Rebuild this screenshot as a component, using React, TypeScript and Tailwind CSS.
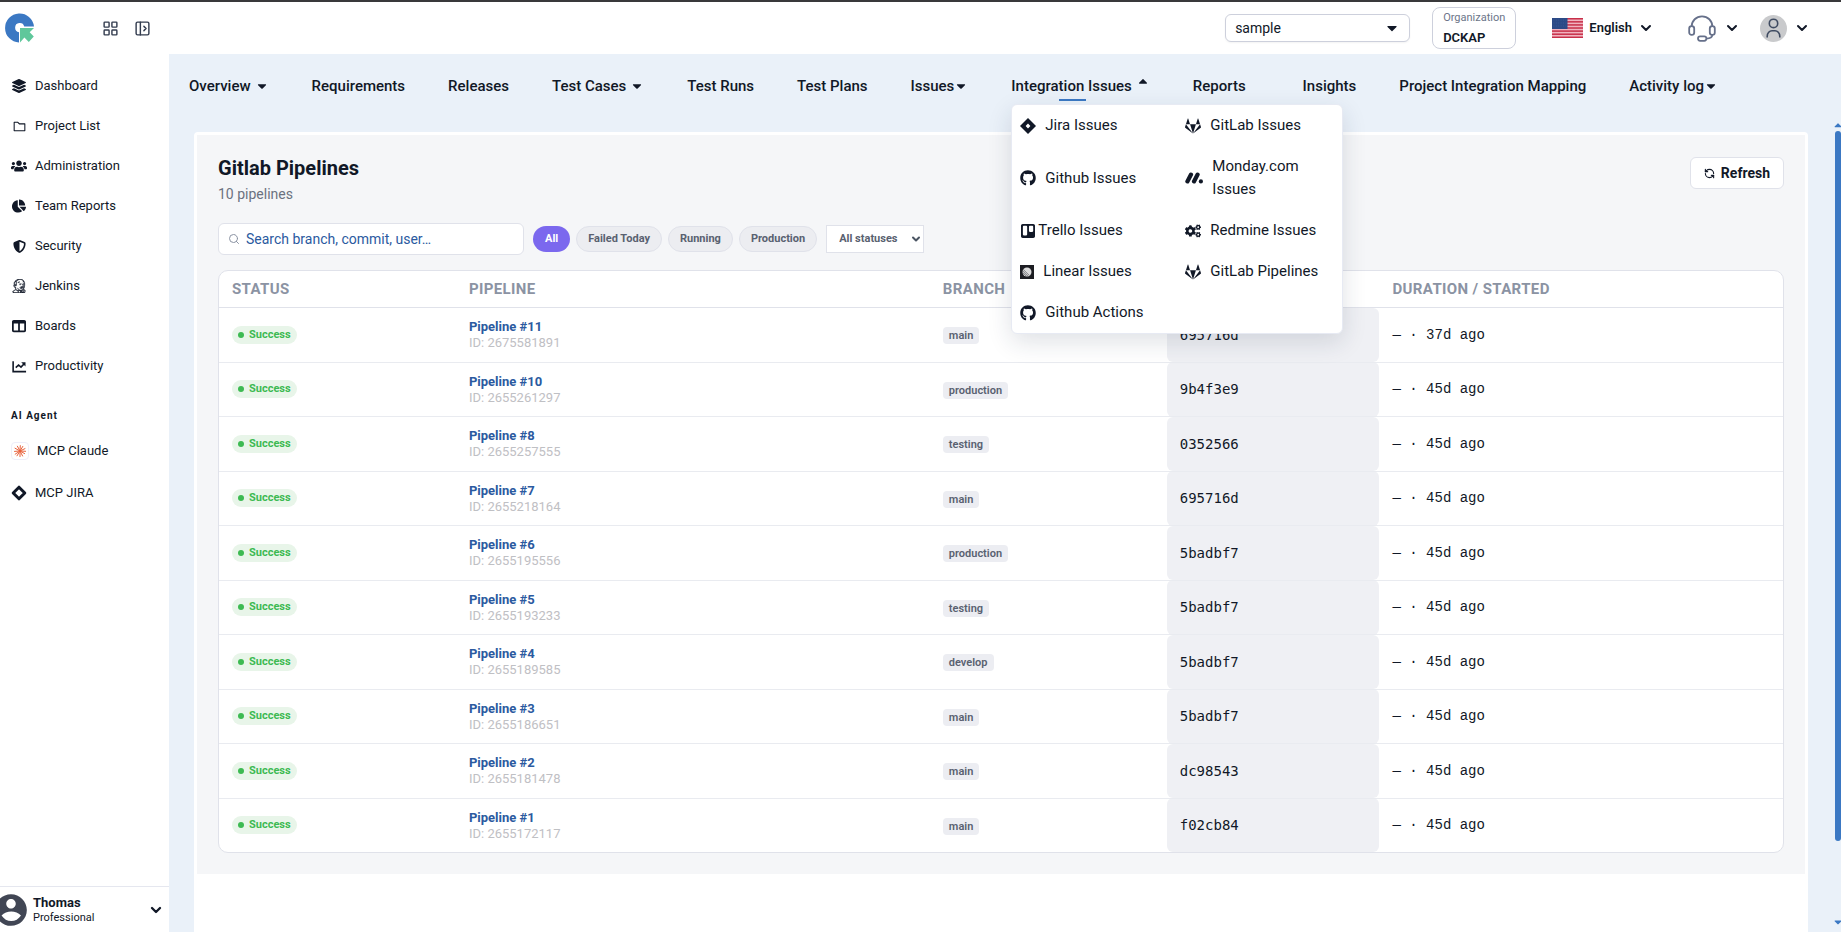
import type { ReactNode } from 'react'
import { LayoutGrid, PanelLeftOpen, Search, RefreshCcw, ChevronDown } from 'lucide-react'
import { FaUsers, FaChartPie, FaJenkins, FaTrello, FaGitlab, FaCaretDown, FaCaretUp, FaCogs, FaGithub, FaLayerGroup } from 'react-icons/fa'
import { FaShieldHalved, FaTableColumns } from 'react-icons/fa6'
import { AiOutlineFolder } from 'react-icons/ai'
import { RiAccountCircleFill } from 'react-icons/ri'

interface Pipeline {
  number: number
  id: string
  branch: string
  commit: string
  age: string
}

interface NavItem {
  label: string
  caret?: 'down' | 'up'
  tight?: boolean
  spaced?: boolean
}

interface MenuItem {
  label: string
  icon: ReactNode
  tight?: boolean
}

const pipelines: Pipeline[] = [
  { number: 11, id: '2675581891', branch: 'main', commit: '695716d', age: '37d ago' },
  { number: 10, id: '2655261297', branch: 'production', commit: '9b4f3e9', age: '45d ago' },
  { number: 8, id: '2655257555', branch: 'testing', commit: '0352566', age: '45d ago' },
  { number: 7, id: '2655218164', branch: 'main', commit: '695716d', age: '45d ago' },
  { number: 6, id: '2655195556', branch: 'production', commit: '5badbf7', age: '45d ago' },
  { number: 5, id: '2655193233', branch: 'testing', commit: '5badbf7', age: '45d ago' },
  { number: 4, id: '2655189585', branch: 'develop', commit: '5badbf7', age: '45d ago' },
  { number: 3, id: '2655186651', branch: 'main', commit: '5badbf7', age: '45d ago' },
  { number: 2, id: '2655181478', branch: 'main', commit: 'dc98543', age: '45d ago' },
  { number: 1, id: '2655172117', branch: 'main', commit: 'f02cb84', age: '45d ago' },
]

const navItems: NavItem[] = [
  { label: 'Overview', caret: 'down' },
  { label: 'Requirements' },
  { label: 'Releases' },
  { label: 'Test Cases', caret: 'down' },
  { label: 'Test Runs' },
  { label: 'Test Plans' },
  { label: 'Issues', caret: 'down', tight: true },
  { label: 'Integration Issues', caret: 'up' },
  { label: 'Reports', spaced: true },
  { label: 'Insights' },
  { label: 'Project Integration Mapping' },
  { label: 'Activity log', caret: 'down', tight: true },
]

const filters = ['All', 'Failed Today', 'Running', 'Production']

function Logo() {
  return (
    <svg viewBox="0 0 30 30" className="size-[30px]" aria-hidden="true">
      <path d="M14 29.5A14.5 14.5 0 1 1 29 13.5H19.2A4.6 4.6 0 1 0 14 19.2Z" fill="#3b78c3" />
      <path d="M15 15H29L24.7 19.2 28.8 23.6 23.8 28.9 19.4 24.6 15 29.4Z" fill="#5fc79b" />
    </svg>
  )
}

function FlagIcon() {
  return (
    <svg viewBox="0 0 31 20" className="h-5 w-[31px]" aria-hidden="true">
      <rect width="31" height="20" fill="#f0b3bf" />
      {[0, 3, 6, 9, 12, 15, 18].map((y) => (
        <rect key={y} y={y * 1.03} width="31" height="1.5" fill="#c8304a" />
      ))}
      <rect width="15.5" height="11" fill="#2b4a86" />
      {[2, 5, 8].map((y) => (
        <path key={y} d={`M1.5 ${y}H14.5`} stroke="#4563a0" strokeWidth="0.7" strokeDasharray="0.8 1.6" />
      ))}
    </svg>
  )
}

function HeadsetIcon() {
  return (
    <svg viewBox="0 0 28 27" className="h-[27px] w-7" fill="none" stroke="#66708a" strokeWidth="1.8" aria-hidden="true">
      <path d="M3.6 11.5C3.8 5.6 8.2 1.4 14 1.4S24.2 5.6 24.4 11.5" />
      <rect x="1.2" y="11.2" width="5" height="8.6" rx="2.4" />
      <rect x="21.8" y="11.2" width="5" height="8.6" rx="2.4" />
      <path d="M24.4 19.8C24.2 22.4 21.8 23.6 18.4 23.6" />
      <rect x="10" y="21.4" width="8.4" height="4.4" rx="2.2" />
    </svg>
  )
}

function UserIcon() {
  return (
    <svg viewBox="0 0 27 27" className="size-[27px]" fill="none" stroke="#3f4b61" strokeWidth="1.6" aria-hidden="true">
      <circle cx="13.5" cy="13.5" r="13.5" fill="#c9cacc" stroke="none" />
      <circle cx="13.5" cy="8.4" r="4.2" />
      <path d="M7.2 22.4V21.4C7.2 18 9.6 15.8 12 15.8H15C17.4 15.8 19.8 18 19.8 21.4V22.4" />
    </svg>
  )
}

function ChartIcon() {
  return (
    <svg viewBox="0 0 16 16" className="size-[15px]" fill="none" stroke="currentColor" strokeWidth="1.7" aria-hidden="true">
      <path d="M1.2 2.5V13.5H15" />
      <path d="M4 9.2L7 6.4L9.6 8.6L13 5" />
      <path d="M9.8 3.4H14.4V8Z" fill="currentColor" stroke="none" />
    </svg>
  )
}

function BurstIcon() {
  return (
    <svg viewBox="0 0 12 12" className="size-3" stroke="#e8623d" strokeWidth="1" strokeLinecap="round" aria-hidden="true">
      <path d="M6 6L6.3 .6M6 6L8.8 1.4M6 6L11 3.6M6 6L11.6 6.3M6 6L10.6 8.6M6 6L8.6 11M6 6L6 11.6M6 6L3 10.8M6 6L1.2 9.2M6 6L.5 6.4M6 6L1 3.2M6 6L3.4 1.2" />
    </svg>
  )
}

function DiamondIcon() {
  return (
    <svg viewBox="0 0 16 16" className="size-4" aria-hidden="true">
      <path d="M8 2.2L13.8 8L8 13.8L2.2 8Z" fill="none" stroke="currentColor" strokeWidth="3" strokeLinejoin="round" />
    </svg>
  )
}

function JiraIcon() {
  return (
    <svg viewBox="0 0 16 16" className="size-4" aria-hidden="true">
      <path d="M8 0L16 8L8 16L0 8Z M8 5.6L5.6 8L8 10.4L10.4 8Z" fill="currentColor" fillRule="evenodd" />
    </svg>
  )
}

function MondayIcon() {
  return (
    <svg viewBox="0 0 18 12" className="h-3 w-[18px]" aria-hidden="true">
      <path d="M2.4 9.4L6 2.6M9 9.4L12.6 2.6" stroke="currentColor" strokeWidth="4.2" strokeLinecap="round" />
      <circle cx="15.9" cy="9.4" r="2.1" fill="currentColor" />
    </svg>
  )
}

function LinearIcon() {
  return (
    <svg viewBox="0 0 14 14" className="size-3.5" aria-hidden="true">
      <rect width="14" height="14" fill="#1c1d22" />
      <circle cx="7" cy="7" r="4.5" fill="#dcdcdc" />
      <path d="M2.6 5.8L8.2 11.4M2.5 7.4L6.6 11.5M3.2 4.4L9.6 10.8" stroke="#55565b" strokeWidth="0.7" />
    </svg>
  )
}

const sidebarItems: MenuItem[] = [
  { label: 'Dashboard', icon: <FaLayerGroup className="size-3.5" /> },
  { label: 'Project List', icon: <AiOutlineFolder className="size-[15px]" /> },
  { label: 'Administration', icon: <FaUsers className="size-4" /> },
  { label: 'Team Reports', icon: <FaChartPie className="size-3.5" /> },
  { label: 'Security', icon: <FaShieldHalved className="size-[13px]" /> },
  { label: 'Jenkins', icon: <FaJenkins className="size-3.5" stroke="currentColor" strokeWidth={14} /> },
  { label: 'Boards', icon: <FaTableColumns className="size-3.5" /> },
  { label: 'Productivity', icon: <ChartIcon /> },
]

const integrations: MenuItem[] = [
  { label: 'Jira Issues', icon: <JiraIcon /> },
  { label: 'GitLab Issues', icon: <FaGitlab className="size-4" /> },
  { label: 'Github Issues', icon: <FaGithub className="size-4" /> },
  { label: 'Monday.com Issues', icon: <MondayIcon /> },
  { label: 'Trello Issues', icon: <FaTrello className="size-4" />, tight: true },
  { label: 'Redmine Issues', icon: <FaCogs className="size-4" /> },
  { label: 'Linear Issues', icon: <LinearIcon /> },
  { label: 'GitLab Pipelines', icon: <FaGitlab className="size-4" /> },
  { label: 'Github Actions', icon: <FaGithub className="size-4" /> },
]

function Sidebar() {
  return (
    <aside className="flex w-[169px] shrink-0 flex-col bg-white">
      <nav className="flex-1 pt-3">
        {sidebarItems.map((item) => (
          <a key={item.label} href="#" className="flex h-10 items-center gap-2 pl-[11px] text-[13px]">
            <span className="flex w-4 justify-center">{item.icon}</span>
            {item.label}
          </a>
        ))}
        <h2 className="mt-5 px-[11px] text-[10px] leading-5 font-bold tracking-widest">AI Agent</h2>
        <a href="#" className="mt-1 flex h-[42px] items-center gap-2 pl-[11px] text-[13px]">
          <span className="flex size-[18px] items-center justify-center rounded-sm border border-[#eeeefa]">
            <BurstIcon />
          </span>
          MCP Claude
        </a>
        <a href="#" className="flex h-[42px] items-center gap-2 pl-[11px] text-[13px]">
          <DiamondIcon />
          MCP JIRA
        </a>
      </nav>
      <button type="button" className="flex h-[46px] items-center border-t border-[#e5e7ef] pr-[5px] text-left">
        <RiAccountCircleFill className="-ml-2 size-[38px] text-[#414654]" />
        <span className="ml-[3px] flex-1">
          <span className="block text-[13px] leading-4 font-bold">Thomas</span>
          <span className="block text-[11px] leading-[14px]">Professional</span>
        </span>
        <ChevronDown className="size-4" strokeWidth={3.5} />
      </button>
    </aside>
  )
}

function Header() {
  return (
    <header className="flex h-[54px] shrink-0 items-center border-t-2 border-[#39393b] bg-white pr-[31px] pl-[5px]">
      <Logo />
      <button type="button" aria-label="Apps" className="ml-[67px]">
        <LayoutGrid className="size-[17px] text-[#333c4f]" />
      </button>
      <button type="button" aria-label="Expand sidebar" className="ml-[15px]">
        <PanelLeftOpen className="size-[17px] text-[#333c4f]" />
      </button>
      <div className="ml-auto flex items-center">
        <div className="relative">
          <select
            aria-label="Project"
            className="h-7 w-[185px] appearance-none rounded-md border border-[#cdd0dc] bg-white px-[9px] text-sm shadow-xs"
          >
            <option>sample</option>
          </select>
          <FaCaretDown className="pointer-events-none absolute top-1.5 right-2.5 size-4" />
        </div>
        <div className="ml-[22px] flex h-[42px] flex-col justify-between rounded-lg border border-[#cdd0dc] px-2.5 pt-0.5">
          <span className="text-[11px] leading-4 text-[#6c7589]">Organization</span>
          <span className="text-[13px] leading-5 font-semibold">DCKAP</span>
        </div>
        <button type="button" className="ml-9 flex items-center text-[13px] font-semibold">
          <FlagIcon />
          <span className="ml-1.5">English</span>
          <ChevronDown className="ml-1.5 size-4" strokeWidth={3} />
        </button>
        <button type="button" aria-label="Support" className="ml-[34px] flex items-center gap-2">
          <HeadsetIcon />
          <ChevronDown className="size-4" strokeWidth={3} />
        </button>
        <button type="button" aria-label="Account" className="ml-5 flex items-center gap-[7px]">
          <UserIcon />
          <ChevronDown className="size-4" strokeWidth={3} />
        </button>
      </div>
    </header>
  )
}

function IntegrationMenu() {
  return (
    <div className="absolute top-[30px] left-0 z-10 grid w-[332px] grid-cols-2 rounded-md border border-[#e7eaf3] bg-white shadow-[0_8px_24px_rgba(30,40,70,0.14)]">
      {integrations.map((item) => (
        <a
          key={item.label}
          href="#"
          className={`flex items-center px-2 py-[9px] text-[15px] leading-[23px] font-normal ${item.tight ? 'gap-0.5' : 'gap-[9px]'}`}
        >
          <span className="shrink-0">{item.icon}</span>
          <span className="max-w-28 whitespace-normal">{item.label}</span>
        </a>
      ))}
    </div>
  )
}

function ProjectNav() {
  return (
    <nav className="flex gap-[43px] px-5 pt-5 text-[15px] leading-6 font-medium whitespace-nowrap">
      {navItems.map((item) => (
        <div key={item.label} className={item.spaced ? 'relative mr-3.5' : 'relative'}>
          <a href="#" className={item.tight ? 'flex items-center' : 'flex items-center gap-1'}>
            {item.label}
            {item.caret === 'down' && <FaCaretDown className="size-3.5" />}
            {item.caret === 'up' && <FaCaretUp className="size-3.5 self-start" />}
          </a>
          {item.caret === 'up' && (
            <>
              <span className="absolute top-[25px] left-12 h-0.5 w-[27px] bg-[#3b78c3]" />
              <IntegrationMenu />
            </>
          )}
        </div>
      ))}
    </nav>
  )
}

function PipelineTable() {
  return (
    <div className="mt-[15px] overflow-hidden rounded-[10px] border border-[#e0e2ea] bg-white">
      <table className="w-full table-fixed text-left">
        <thead>
          <tr className="border-b border-[#e0e2ea] text-[15px] leading-9 tracking-wide text-[#8b93a3] uppercase">
            <th className="w-[15.15%] px-[13px]">Status</th>
            <th className="w-[30.3%] px-[13px]">Pipeline</th>
            <th className="w-[15.15%] px-[13px]">Branch</th>
            <th className="w-[13.6%] px-[13px]">Commit</th>
            <th className="px-[13px]">Duration / Started</th>
          </tr>
        </thead>
        <tbody>
          {pipelines.map((pipeline) => (
            <tr key={pipeline.id} className="border-b border-[#e9ebf0] last:border-b-0">
              <td className="px-[13px]">
                <div className="flex">
                  <span className="flex items-center gap-[5px] rounded-full bg-[#e8f5e9] px-1.5 text-[11px] leading-[18px] font-bold text-[#3dba52]">
                    <span className="size-1.5 rounded-full bg-current" />
                    Success
                  </span>
                </div>
              </td>
              <td className="px-[13px] pt-[11px] pb-2.5 text-[13px] leading-tight">
                <a href="#" className="block font-bold text-[#2b5aa0]">Pipeline #{pipeline.number}</a>
                <span className="block text-[#bfc0c4]">ID: {pipeline.id}</span>
              </td>
              <td className="px-[13px] pt-0.5">
                <div className="flex">
                  <span className="rounded bg-[#ecedf2] px-1.5 text-[11px] leading-[17px] font-semibold text-[#596170]">
                    {pipeline.branch}
                  </span>
                </div>
              </td>
              <td className="rounded-md bg-[#eff0f4] px-[13px] font-['DejaVu_Sans_Mono',monospace] text-sm">{pipeline.commit}</td>
              <td className="px-[13px] font-['Liberation_Mono',monospace] text-sm">— · {pipeline.age}</td>
            </tr>
          ))}
        </tbody>
      </table>
    </div>
  )
}

export default function App() {
  return (
    <div className="flex h-screen flex-col overflow-hidden bg-white font-[Roboto,sans-serif] text-[#111827]">
      <Header />
      <div className="flex min-h-0 flex-1">
        <Sidebar />
        <main className="flex min-w-0 flex-1 flex-col bg-[#eaf1f9]">
          <ProjectNav />
          <div className="mt-[34px] flex min-h-0 flex-1 pl-[25px]">
            <section className="min-w-0 flex-1 rounded-t bg-white p-[3px]">
              <div className="bg-[#f5f6f8] p-[21px]">
                <div className="flex items-end justify-between">
                  <div>
                    <h1 className="text-xl leading-6 font-bold">Gitlab Pipelines</h1>
                    <p className="mt-1 text-sm leading-5 text-[#6b7280]">{pipelines.length} pipelines</p>
                  </div>
                  <button type="button" className="mb-[15px] flex h-8 items-center gap-1.5 rounded-md border border-[#e0e2ea] bg-white px-[13px] text-sm font-bold">
                    <RefreshCcw className="size-[11px]" strokeWidth={2.5} />
                    Refresh
                  </button>
                </div>
                <div className="mt-[19px] flex items-center gap-1.5">
                  <label className="mr-[3px] flex h-8 w-[306px] items-center gap-1.5 rounded-md border border-[#e0e2ea] bg-white px-[9px]">
                    <Search className="size-3 text-[#8b93a3]" />
                    <input
                      type="text"
                      aria-label="Search pipelines"
                      placeholder="Search branch, commit, user…"
                      className="min-w-0 flex-1 text-sm outline-none placeholder:text-[#2b5aa0]"
                    />
                  </label>
                  {filters.map((filter) => (
                    <button
                      key={filter}
                      type="button"
                      className={
                        filter === 'All'
                          ? 'h-[26px] rounded-full bg-[#7b68ee] px-3 text-[11px] font-bold text-white'
                          : 'h-[26px] rounded-full border border-[#e0e2ea] bg-[#ecedf1] px-[11px] text-[11px] font-bold text-[#596170]'
                      }
                    >
                      {filter}
                    </button>
                  ))}
                  <div className="relative ml-[3px]">
                    <select
                      aria-label="Status"
                      className="h-7 w-[98px] appearance-none border border-[#e0e2ea] bg-white pl-3 text-[11px] font-bold text-[#596170]"
                    >
                      <option>All statuses</option>
                    </select>
                    <ChevronDown className="pointer-events-none absolute top-2 right-0.5 size-3 text-[#4b5563]" strokeWidth={4} />
                  </div>
                </div>
                <PipelineTable />
              </div>
            </section>
            <div className="ml-[27px] flex w-1.5 flex-col items-center pb-1" aria-hidden="true">
              <FaCaretUp className="-mt-[13px] size-3 shrink-0 text-[#3b78c3]" />
              <div className="h-[710px] w-1.5 rounded-full bg-[#3b78c3]" />
              <FaCaretDown className="mt-auto size-3 shrink-0 text-[#3b78c3]" />
            </div>
          </div>
        </main>
      </div>
    </div>
  )
}
